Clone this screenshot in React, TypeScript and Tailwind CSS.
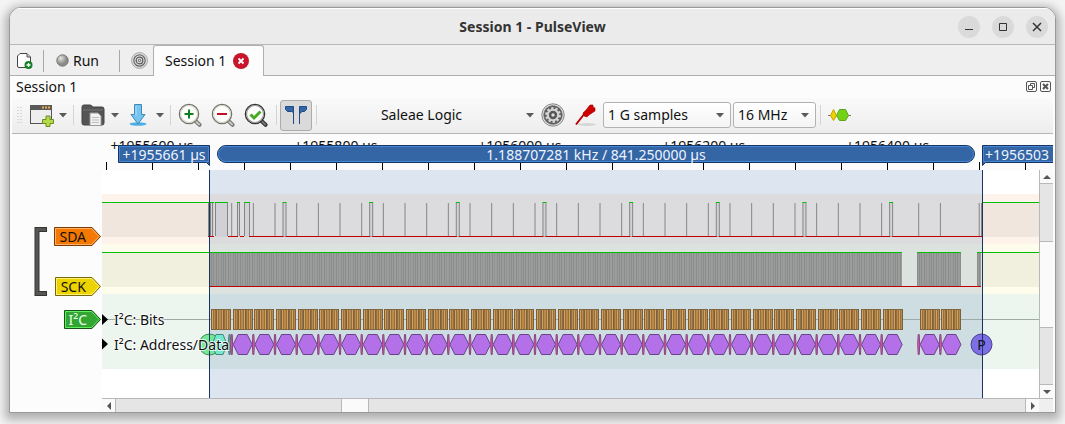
import { useState } from "react";
import type { ReactNode } from "react";

const BYTE = 21.665;
const FIRST_BYTE = 231.7;

const bytes = [...Array.from({ length: 31 }, (_, i) => FIRST_BYTE + i * BYTE), 918.7, 940.4];
const bitGroups = [FIRST_BYTE - BYTE, ...bytes];
const ackPulses = Array.from({ length: 8 }, (_, i) => 282.5 + i * 86.66);
const sdaHigh: [number, number][] = [[102, 214], [215, 228], [237, 240], [244, 250], ...ackPulses.map((x): [number, number] => [x, x + 4]), [982, 3000]];
const sdaEdges = [208.5, 210.5, 212.5, 215.5, 227.5, 237.5, 239.5, 244.5, 249.5, ...bytes, 979.2, 981.5];
const clockBursts: [number, number][] = [[210, 902], [917, 961], [977, 981]];
const ticks = Array.from({ length: 60 }, (_, i) => 106.5 + i * 45.96);
const rulerLabels = ["+1955600 µs", "+1955800 µs", "+1956000 µs", "+1956200 µs", "+1956400 µs"];

function Separator({ className = "" }: { className?: string }) {
  return <span className={`w-px h-5 bg-[#d4d4d4] shrink-0 ${className}`} />;
}

function Caret() {
  return <svg width="8" height="5" className="shrink-0"><path d="M0 0H8L4 4.5Z" fill="#5a5a5a" /></svg>;
}

function Gear({ size, teeth }: { size: number; teeth?: boolean }) {
  return (
    <svg width={size} height={size} viewBox="0 0 24 24" fill="none" stroke="#666">
      <circle cx="12" cy="12" r="11.2" fill="#e2e2e2" stroke="#888" />
      {teeth ? (
        <>
          <circle cx="12" cy="12" r="9.4" fill="#5c5c5c" stroke="#777" strokeWidth=".6" />
          <circle cx="12" cy="12" r="6.6" stroke="#d4d4d4" strokeWidth="2.6" strokeDasharray="2.4 1.75" />
          <circle cx="12" cy="12" r="5.2" stroke="#d4d4d4" strokeWidth="2" />
          <circle cx="12" cy="12" r="2.6" fill="#ddd" stroke="#555" strokeWidth="1.8" />
        </>
      ) : (
        <>
          <circle cx="12" cy="12" r="8" stroke="#6a6a6a" strokeWidth="1.8" />
          <circle cx="12" cy="12" r="4.7" stroke="#5a5a5a" strokeWidth="1.8" />
          <circle cx="12" cy="12" r="1.7" stroke="#555" strokeWidth="1.4" />
        </>
      )}
    </svg>
  );
}

function Magnifier({ children, dark }: { children: ReactNode; dark?: boolean }) {
  return (
    <svg width="24" height="24" viewBox="0 0 24 24">
      <path d="M17 17.5L21.5 21.8" stroke={dark ? "#333" : "#777"} strokeWidth="4" strokeLinecap="round" />
      <path d="M18 18.5L21.2 21.5" stroke={dark ? "#777" : "#c8c8c0"} strokeWidth="1.8" strokeLinecap="round" />
      <circle cx="11" cy="11" r="9.6" fill="#fcfffc" stroke={dark ? "#333" : "#74746c"} strokeWidth="1.4" />
      <circle cx="11" cy="11" r="8.5" fill="none" stroke={dark ? "#999" : "#d4d4c8"} strokeWidth="1.2" />
      {children}
    </svg>
  );
}

function WindowButton({ label, children }: { label: string; children: ReactNode }) {
  return (
    <button aria-label={label} className="size-[22px] rounded-full bg-[#dadada] flex items-center justify-center">
      <svg width="10" height="10" fill="none" stroke="#333">{children}</svg>
    </button>
  );
}

function ToolSelect({ label, value, options, className }: { label: string; value: string; options: string[]; className: string }) {
  return (
    <div className={`relative flex items-center shrink-0 ${className}`}>
      <select aria-label={label} defaultValue={value} className="appearance-none w-full h-[26px] pl-1 rounded-[3px] border border-[#b2b2b2] bg-gradient-to-b from-white to-[#f4f4f4]">
        {options.map((o) => <option key={o}>{o}</option>)}
      </select>
      <span className="absolute right-[7px] pointer-events-none"><Caret /></span>
    </div>
  );
}

function Toolbar() {
  const [cursors, setCursors] = useState(true);

  return (
    <div role="toolbar" className="h-9 shrink-0 flex items-center pl-[5px] pb-px border-b border-[#b5b5b5] bg-gradient-to-b from-[#fafafa] to-[#ededed]">
      <svg width="5" height="18" className="shrink-0"><path d="M1 1V18M4 1V18" stroke="#bbb" strokeDasharray="1 2" /></svg>
      <button aria-label="New view" className="ml-2">
        <svg width="24" height="24" viewBox="0 0 24 24">
          <rect x=".5" y="2.5" width="21" height="18" fill="#eee" stroke="#555" />
          <path d="M0 2H22V7H0Z" fill="#5a5a5a" />
          <path d="M12 4.5H20" stroke="#f0a83c" strokeWidth="2" strokeDasharray="2 1" />
          <path d="M16 13H20V16.500H23.500V20.500H20V23.500H16V20.500H12.500V16.500H16Z" fill="#b6d94c" stroke="#6b8e1a" />
        </svg>
      </button>
      <button aria-label="New view menu" className="ml-[5px]"><Caret /></button>
      <Separator className="ml-1.5" />
      <button aria-label="Open" className="ml-[7px]">
        <svg width="24" height="24" viewBox="0 0 24 24">
          <path d="M1 4Q1 2 3 2H9Q11 2 11.500 4H21Q23 4 23 6V20Q23 22 21 22H3Q1 22 1 20Z" fill="#555" stroke="#444" />
          <path d="M2 7H22" stroke="#777" />
          <path d="M9 10H17L20 13V22.500H9Z" fill="#f2f2f2" stroke="#999" />
          <path d="M11 14.500H18M11 17H18M11 19.500H18" stroke="#bbb" />
        </svg>
      </button>
      <button aria-label="Open menu" className="ml-1.5"><Caret /></button>
      <button aria-label="Save" className="ml-[9px]">
        <svg width="20" height="24" viewBox="0 0 20 24">
          <ellipse cx="10" cy="21" rx="8.500" ry="1.800" fill="#4eaee8" />
          <path d="M6.500 1.500H13.500V11.500H17L10 21L3 11.500H6.500Z" fill="#74c4f2" stroke="#4288b4" />
          <path d="M8 3V12.500" stroke="#b2e0fa" />
        </svg>
      </button>
      <button aria-label="Save menu" className="ml-2"><Caret /></button>
      <Separator className="ml-1.5" />
      <button aria-label="Zoom in" className="ml-[7px]"><Magnifier><path d="M11 6.500V15.500M6.500 11H15.500" stroke="#0c8020" strokeWidth="2" /></Magnifier></button>
      <button aria-label="Zoom out" className="ml-[9px]"><Magnifier><path d="M6 11H16" stroke="#c40c28" strokeWidth="2" /></Magnifier></button>
      <button aria-label="Zoom to fit" className="ml-[9px]"><Magnifier dark><path d="M6.500 11.500L10 15L16.500 8.500" fill="none" stroke="#44aa22" strokeWidth="3" /></Magnifier></button>
      <Separator className="ml-2" />
      <button aria-label="Show cursors" aria-pressed={cursors} onClick={() => setCursors(!cursors)} className={`ml-[3px] w-8 h-[31px] shrink-0 rounded-[3px] border flex items-center justify-center ${cursors ? "bg-[#dadada] border-[#acacac]" : "border-transparent"}`}>
        <svg width="24" height="20" viewBox="0 0 24 20" fill="#3465a4" stroke="#204a87">
          <path d="M1.500 1.500H9.500V19V7.500L7.500 6.500H3.500L1.500 4.500Z" />
          <path d="M22.500 1.500H15.500V19V9L18 6.500H20.500L22.500 4.500Z" />
        </svg>
      </button>
      <Separator className="ml-1" />
      <button className="w-[221px] pr-1 shrink-0 h-7 flex items-center">
        <span className="flex-1">Saleae Logic</span><Caret />
      </button>
      <button aria-label="Configure device" className="ml-[3px]"><Gear size={24} teeth /></button>
      <button aria-label="Configure channels" className="ml-[9px]">
        <svg width="24" height="24" viewBox="0 0 24 24">
          <ellipse cx="13" cy="21.500" rx="9" ry="1.500" fill="#d5d5d5" />
          <path d="M2 21.500L11 10" stroke="#b00" strokeWidth="2" />
          <path d="M9 10L12 7L16 2H19V4L21 5V8L15 12L13 14L10 13Z" fill="#cc0000" stroke="#a00" strokeWidth=".6" />
        </svg>
      </button>
      <ToolSelect label="Sample count" value="1 G samples" options={["1 M samples", "1 G samples"]} className="ml-[5px] w-32" />
      <ToolSelect label="Sample rate" value="16 MHz" options={["8 MHz", "16 MHz"]} className="ml-0.5 w-[83px]" />
      <Separator className="ml-1" />
      <button aria-label="Add protocol decoder" className="ml-[7px]">
        <svg width="23" height="14" viewBox="0 0 23 14">
          <path d="M0 7.500H23" stroke="#777" />
          <path d="M5.500 1.500L8.500 7.500L5.500 12.500L2.500 7.500Z" fill="#edd400" stroke="#c4a000" />
          <path d="M11.500 1.500H17.500L20.500 7.500L17.500 12.500H11.500L8.500 7.500Z" fill="#73d216" stroke="#5aa813" />
        </svg>
      </button>
    </div>
  );
}

function ChannelTag({ x, y, fill, inner, stroke, textFill = "#111", label }: { x: number; y: number; fill: string; inner: string; stroke: string; textFill?: string; label: string }) {
  return (
    <g>
      <path d={`M${x} ${y}H92L100.500 ${y + 9}L92 ${y + 18}H${x}Z`} fill={fill} stroke={stroke} />
      <path d={`M${x + 1} ${y + 1}H91.500L99 ${y + 9}L91.500 ${y + 17}H${x + 1}Z`} fill="none" stroke={inner} />
      <text x={(x + 91) / 2} y={y + 14} textAnchor="middle" fill={textFill}>{label}</text>
    </g>
  );
}

function ChannelHeader() {
  return (
    <svg width="90" height="264" viewBox="12 134 90 264" className="shrink-0 text-[14px]">
      <path d="M47 229.500H37V293.500H47" fill="none" stroke="#353535" strokeWidth="5" />
      <path d="M46 229.500H37V293.500H46" fill="none" stroke="#555753" strokeWidth="3" />
      <ChannelTag x={54.5} y={227.5} fill="#f57900" inner="#ffb066" stroke="#7a3c00" label="SDA" />
      <ChannelTag x={55.5} y={277.5} fill="#edd400" inner="#fff07a" stroke="#766a00" label="SCK" />
      <ChannelTag x={64.5} y={310.5} fill="#32a532" inner="#5ff05f" stroke="#175217" textFill="#eaffea" label="I²C" />
    </svg>
  );
}

function Ruler() {
  return (
    <svg width="100%" height="36" className="block text-[14px]">
      <g transform="translate(-102 -134)">
        {rulerLabels.map((label, i) => <text key={label} x={152 + i * 183.9} y="151" textAnchor="middle" fill="#111">{label}</text>)}
        <path d={ticks.map((x) => `M${Math.floor(x)}.500 162V170`).join("")} stroke="#000" />
        <path d="M118.500 145.500H209.500V165.500L206.500 162.500H118.500Z" fill="#3465a4" stroke="#17355f" />
        <path d="M119.500 146.500H208.500V161.500H119.500Z" fill="none" stroke="#4584d6" />
        <text x="164" y="160" textAnchor="middle" fill="#eef4ff">+1955661 µs</text>
        <rect x="217.500" y="145.500" width="757" height="17" rx="8.500" fill="#3465a4" stroke="#17355f" />
        <rect x="218.500" y="146.500" width="755" height="15" rx="7.500" fill="none" stroke="#4584d6" />
        <text x="596" y="160" textAnchor="middle" fill="#eef4ff">1.188707281 kHz / 841.250000 µs</text>
        <path d="M982.500 145.500H1076V162.500H985.500L982.500 165.500Z" fill="#3465a4" stroke="#17355f" />
        <path d="M1076 161.500H983.500V146.500H1076" fill="none" stroke="#4584d6" />
        <text x="985" y="160" fill="#eef4ff">+1956503 µs</text>
      </g>
    </svg>
  );
}

function hexagon(x: number, w: number, slope: number) {
  return `M${x} 344.500L${x + slope} 334.500H${x + w - slope}L${x + w} 344.500L${x + w - slope} 354.500H${x + slope}Z`;
}

function Traces() {
  return (
    <svg width="100%" height="228" className="block bg-white text-[14px]">
      <defs>
        <pattern id="clock" x="210" width="12" height="34" patternUnits="userSpaceOnUse">
          <rect width="12" height="34" fill="#9a9d9b" />
          <path d="M1.500 0V34M3.500 0V34M6.500 0V34M11.500 0V34" stroke="#8a8d8b" />
          <path d="M8.500 0V34" stroke="#909391" />
        </pattern>
      </defs>
      <g transform="translate(-102 -170)">
        <rect x="102" y="194" width="3000" height="50" fill="#fef3ea" />
        <rect x="102" y="244" width="3000" height="50" fill="#fefcea" />
        <rect x="102" y="294" width="3000" height="75" fill="#ecf6ee" />
        {sdaHigh.map(([a, b]) => <rect key={a} x={a} y="203" width={b - a} height="34" fill="#000" opacity=".05" />)}
        <rect x="102" y="253" width="108" height="34" fill="#000" opacity=".05" />
        <rect x="982" y="253" width="3000" height="34" fill="#000" opacity=".05" />
        <rect x="210" y="170" width="772" height="228" fill="#3465a4" opacity=".167" />

        <path d={sdaEdges.map((x) => `M${x} 203V236`).join("")} stroke="#777" strokeOpacity=".85" />
        {ackPulses.map((x) => <path key={x} d={`M${x + 0.5} 203V236M${x + 3.5} 203V236`} stroke="#888" />)}
        <path d="M208 236.500H214M228 236.500H238M240 236.500H244M249 236.500H982" stroke="#c00000" />
        {ackPulses.map((x) => <path key={x} d={`M${x + 1} 236.500H${x + 3}`} stroke="#aaa" />)}
        <path d={sdaHigh.map(([a, b]) => `M${a} 202.500H${b}`).join("")} stroke="#00c000" />

        {clockBursts.map(([a, b]) => <rect key={a} x={a} y="253" width={b - a} height="33" fill="url(#clock)" />)}
        <path d="M102 252.500H902M917 252.500H961M977 252.500H3000" stroke="#00c000" />
        <path d="M210 286.500H981" stroke="#c00000" />

        <path d="M102 319.500H3000" stroke="#9eaaa5" />
        {bitGroups.map((x) => (
          <g key={x} transform={`translate(${Math.round(x + 1)} 309)`}>
            <rect width="20" height="21" fill="#92703f" />
            <path d="M1.500 1V20M6.500 1V20M11.500 1V20M16.500 1V20" stroke="#d9a056" />
            <path d="M3.500 1V20M8.500 1V20M9.500 1V20M14.500 1V20M18.500 1V20" stroke="#b98a4c" />
            <path d="M.500 1V20M5.500 1V20M12.500 1V20M19.500 1V20" stroke="#7a6040" />
            <path d="M0 .500H20M0 20.500H20" stroke="#79603e" strokeDasharray="2 1" />
          </g>
        ))}
        <circle cx="209.500" cy="344.500" r="10.500" fill="#73e896" stroke="#40885a" />
        <path d={hexagon(212, 15, 4)} fill="#73e8cc" stroke="#408878" />
        <path d={hexagon(228, 3, 1)} fill="#5ca894" stroke="#408878" />
        {bytes.map((x) => (
          <g key={x}>
            <path d={hexagon(x - 1, 2, 0.5)} fill="#d65cb8" stroke="#8c4282" />
            <path d={hexagon(x + 1.5, 19, 5)} fill="#b470e8" stroke="#694388" />
          </g>
        ))}
        <circle cx="981.500" cy="344.500" r="10.500" fill="#7d6fe8" stroke="#494188" />
        <text x="981.500" y="350" textAnchor="middle" fill="#111">P</text>
        <path d="M209.500 170V398M982.500 170V398" stroke="#17355f" />

        <path d="M102 314L108 319.500L102 325ZM102 338.500L108 344L102 349.500Z" fill="#000" />
        <g fill="#111" stroke="#fff" strokeWidth="2" strokeOpacity=".8" paintOrder="stroke">
          <text x="114" y="325">I²C: Bits</text>
          <text x="114" y="350">I²C: Address/Data</text>
        </g>
      </g>
    </svg>
  );
}

function ScrollArrow({ label, d }: { label: string; d: string }) {
  return (
    <button aria-label={label} className="size-[13px] shrink-0 bg-[#fafafa] flex items-center justify-center">
      <svg width="8" height="8"><path d={d} fill="#555" /></svg>
    </button>
  );
}

export default function App() {
  return (
    <div className="min-h-screen px-[9px] pt-[7px] pb-2.5 bg-[#f4f4f4] font-['Noto_Sans','Open_Sans',sans-serif] text-[14px] leading-5 text-[#111]">
      <div className="flex flex-col overflow-hidden rounded-t-xl border border-[#999] bg-[#fcfcfc] shadow-[0_3px_10px_4px_rgba(0,0,0,0.28)]">
        <header className="h-[37px] shrink-0 bg-[#ebebeb] border-b border-[#b8b8b8] border-t border-t-white grid grid-cols-[1fr_auto_1fr] items-center">
          <h1 className="col-start-2 font-bold text-[#333]">Session 1 - PulseView</h1>
          <div className="justify-self-end flex gap-3 pr-[7px]">
            <WindowButton label="Minimize"><path d="M1 7.500H9" /></WindowButton>
            <WindowButton label="Maximize"><path d="M1.500 1.500H8.500V8.500H1.500Z" /></WindowButton>
            <WindowButton label="Close"><path d="M1 1L9 9M9 1L1 9" strokeWidth="1.500" /></WindowButton>
          </div>
        </header>

        <nav className="h-[31px] shrink-0 flex items-center bg-[#efefef] shadow-[inset_0_-1px_0_#b0b0b0]">
          <button aria-label="New session" className="ml-1.5">
            <svg width="18" height="18" viewBox="0 0 18 18">
              <path d="M4 1.500H11L14.500 5V14.500Q14.500 15.500 13 15.500H3Q1.500 15.500 1.500 14V4Z" fill="#fff" stroke="#444" />
              <path d="M11 1.500V5H14.500" fill="#ccc" stroke="#555" />
              <circle cx="12.500" cy="13" r="4" fill="#158225" />
              <path d="M10.500 13H14.500M12.500 11V15" stroke="#fff" strokeWidth="1.300" />
            </svg>
          </button>
          <span className="ml-[9px] w-px h-[22px] bg-[#a8a8a8]" />
          <button className="ml-3 flex items-center gap-1 w-[63px]">
            <svg width="13" height="13">
              <defs><radialGradient id="led" cx=".35" cy=".3"><stop stopColor="#e4e4e0" /><stop offset="1" stopColor="#8b8c88" /></radialGradient></defs>
              <circle cx="6.500" cy="6.500" r="5.700" fill="url(#led)" stroke="#777" />
            </svg>
            Run
          </button>
          <span className="w-px h-[22px] bg-[#a8a8a8]" />
          <button aria-label="Settings" className="ml-[11px]"><Gear size={17} /></button>
          <div className="ml-[5px] h-[31px] w-[111px] pl-[11px] flex items-center gap-[7px] bg-[#fcfcfc] border border-b-0 border-[#b0b0b0] rounded-t-[3px]">
            <button className="whitespace-nowrap">Session 1</button>
            <button aria-label="Close Session 1">
              <svg width="16" height="16"><circle cx="8" cy="8" r="8" fill="#c7162b" /><path d="M5.500 5.500L10.500 10.500M10.500 5.500L5.500 10.500" stroke="#fff" strokeWidth="1.800" /></svg>
            </button>
          </div>
        </nav>

        <main className="mx-0.5 flex flex-col">
          <div className="h-[22px] shrink-0 flex items-center pl-1 pr-0.5 pb-px">
            <h2>Session 1</h2>
            <div className="ml-auto flex gap-[3px]">
              <button aria-label="Float">
                <svg width="11" height="11" fill="none" stroke="#555"><rect x=".5" y=".5" width="10" height="10" rx="1.500" /><path d="M4.500 4.500V2.500H8.500V6.500H7M2.500 4.500H6.500V8.500H2.500Z" /></svg>
              </button>
              <button aria-label="Close dock">
                <svg width="11" height="11" fill="none" stroke="#555"><rect x=".5" y=".5" width="10" height="10" rx="1.500" /><path d="M3 3L8 8M8 3L3 8" strokeWidth="2" /></svg>
              </button>
            </div>
          </div>
          <Toolbar />
          <div className="flex">
            <ChannelHeader />
            <div className="flex-1 min-w-0">
              <Ruler />
              <div className="flex h-[228px]">
                <div className="flex-1 min-w-0 overflow-hidden"><Traces /></div>
                <div className="w-3.5 shrink-0 flex flex-col border-l border-[#b8b8b8] bg-[#e5e5e5]">
                  <ScrollArrow label="Scroll up" d="M0 6H8L4 2Z" />
                  <div className="flex-1 flex flex-col border-y border-[#b8b8b8]">
                    <div className="grow-[58]" />
                    <div className="grow-[86] bg-[#fafafa] border-y border-[#b8b8b8]" />
                    <div className="grow-[57]" />
                  </div>
                  <ScrollArrow label="Scroll down" d="M0 2H8L4 6Z" />
                </div>
              </div>
              <div className="flex h-3.5 border-t border-[#b8b8b8] bg-[#efefef]">
                <ScrollArrow label="Scroll left" d="M6 0V8L2 4Z" />
                <div className="flex-1 flex border-x border-[#b8b8b8] bg-[#e5e5e5]">
                  <div className="grow-[225]" />
                  <div className="grow-[26] bg-[#fafafa] border-x border-[#b8b8b8]" />
                  <div className="grow-[656]" />
                </div>
                <ScrollArrow label="Scroll right" d="M2 0V8L6 4Z" />
                <span className="w-3.5 shrink-0" />
              </div>
            </div>
          </div>
        </main>
      </div>
    </div>
  );
}
